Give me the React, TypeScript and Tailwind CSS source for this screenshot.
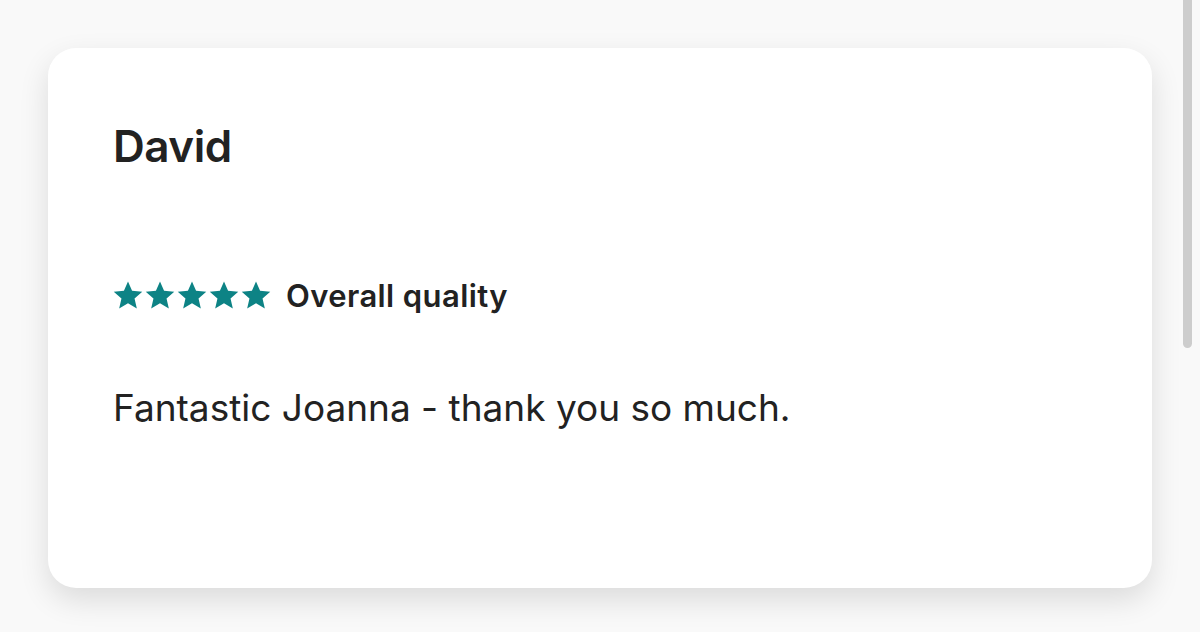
import React from 'react';

const Star = () => (
  <svg viewBox="0 0 24 24" className="w-[32px] h-[32px]" fill="#0d8385">
    <path d="M12 1.8l3.05 7.05 7.65.7-5.8 5.05 1.73 7.5L12 18.15 5.37 22.1l1.73-7.5L1.3 9.55l7.65-.7z" />
  </svg>
);

const App = () => {
  return (
    <div
      className="relative w-[1200px] h-[632px] overflow-hidden bg-[#f9f9f9] pt-[48px] pl-[48px]"
      style={{ fontFamily: 'Inter, "Noto Sans", sans-serif' }}
    >
      <div className="w-[1104px] h-[540px] bg-white rounded-[28px] shadow-[0_12px_30px_rgba(0,0,0,0.12)] pl-[64px] pt-[76px]">
        <h1 className="ml-[1px] text-[44px] leading-none font-semibold text-[#222222] tracking-[-0.5px]">
          David
        </h1>
        <div className="flex items-center mt-[111px]">
          <div className="flex">
            <Star />
            <Star />
            <Star />
            <Star />
            <Star />
          </div>
          <span className="ml-[14px] text-[31px] leading-none font-semibold text-[#222222] tracking-[0.4px]">
            Overall quality
          </span>
        </div>
        <p className="ml-[1px] mt-[78px] text-[37px] leading-none text-[#222222]">
          Fantastic Joanna - thank you so much.
        </p>
      </div>
      <div className="absolute right-[8px] top-0 w-[9px] h-[348px] bg-[#cdcdcd] rounded-b-full" />
    </div>
  );
};

export default App;
